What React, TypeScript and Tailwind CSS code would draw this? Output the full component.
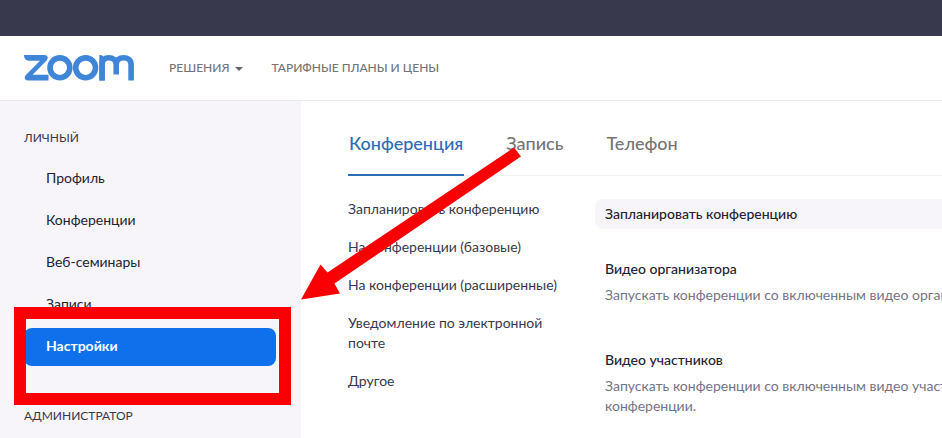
const personalLinks = [
  { label: "Профиль" },
  { label: "Конференции" },
  { label: "Веб-семинары" },
  { label: "Записи" },
  { label: "Настройки", active: true },
];

const tabs = [
  { label: "Конференция", active: true },
  { label: "Запись" },
  { label: "Телефон" },
];

const sections = [
  "Запланировать конференцию",
  "На конференции (базовые)",
  "На конференции (расширенные)",
  "Уведомление по электронной почте",
  "Другое",
];

const Logo = () => (
  <svg
    viewBox="0 0 110 26"
    className="h-[26px] w-[110px]"
    fill="none"
    stroke="#3f86d8"
    strokeWidth="5.6"
    aria-hidden="true"
  >
    <path
      d="M0 0H20.5C23.8 0 24.8 3.2 22.6 5.4L8.6 19.8H24.5V25.5H4C.6 25.5-.3 22.2 1.9 20L16 5.7H4.5C2 5.7 0 3.2 0 0Z"
      fill="#3f86d8"
      stroke="none"
    />
    <circle cx="35.9" cy="12.8" r="9.9" />
    <circle cx="61.6" cy="12.8" r="9.9" />
    <path d="M78.1 25.5V9.5C78.1 5 80.8 2.8 84.8 2.8S92.2 5 92.2 9.5V19.5M92.2 9.5C92.2 5 95.4 2.8 99.6 2.8S107.1 5 107.1 9.5V25.5" />
    <path d="M75.3 0C78.4 0 80.8 1.6 80.8 5V25.5H75.3Z" fill="#3f86d8" stroke="none" />
  </svg>
);

const Header = () => (
  <header className="flex h-[65px] items-center border-b border-[#e9e7ec] px-6">
    <a href="#" aria-label="zoom" className="shrink-0">
      <Logo />
    </a>
    <nav className="ml-[35px] flex items-center gap-7 text-xs leading-5 font-medium text-[#747476]">
      <button className="flex items-center gap-[6px]">
        РЕШЕНИЯ
        <span className="mt-[2px] border-x-4 border-t-4 border-x-transparent border-t-[#666668]" />
      </button>
      <a href="#">ТАРИФНЫЕ ПЛАНЫ И ЦЕНЫ</a>
    </nav>
  </header>
);

const Sidebar = () => (
  <aside className="w-[301px] shrink-0 bg-[#f7f5fa] pt-[27px] pr-[25px] pb-3 pl-6">
    <h2 className="text-xs leading-5 text-[#39394d]">ЛИЧНЫЙ</h2>
    <ul className="mt-3 flex flex-col gap-1">
      {personalLinks.map((link) => (
        <li key={link.label}>
          <a
            href="#"
            className={
              link.active
                ? "block rounded-lg bg-[#0e71eb] px-[22px] pt-2 pb-[10px] text-sm leading-5 font-bold text-white"
                : "block rounded-lg px-[22px] pt-2 pb-[10px] text-sm leading-5 text-[#232333]"
            }
          >
            {link.label}
          </a>
        </li>
      ))}
    </ul>
    <h2 className="mt-10 text-xs leading-5 text-[#39394d]">АДМИНИСТРАТОР</h2>
  </aside>
);

const Setting = ({ title, text }: { title: string; text: string }) => (
  <div>
    <h3 className="text-sm leading-5 font-medium text-[#232333]">{title}</h3>
    <p className="mt-[6px] text-sm leading-5 text-[#747487]">{text}</p>
  </div>
);

const Content = () => (
  <main className="min-w-0 flex-1 overflow-hidden pt-7 pl-[47px]">
    <nav className="flex gap-[41px] border-b border-[#f1f0f4] text-lg leading-7 font-medium">
      {tabs.map((tab) => (
        <a
          key={tab.label}
          href="#"
          className={
            tab.active
              ? "-mb-px border-b-2 border-[#2d6db5] px-px pb-[17px] text-[#2d6db5]"
              : "px-px pb-[17px] text-[#747476]"
          }
        >
          {tab.label}
        </a>
      ))}
    </nav>
    <div className="flex pt-[23px]">
      <ul className="flex w-[247px] shrink-0 flex-col gap-[18px] pr-8 text-sm leading-5 text-[#39394d]">
        {sections.map((section) => (
          <li key={section}>
            <a href="#" className="block">
              {section}
            </a>
          </li>
        ))}
      </ul>
      <div className="min-w-[420px] flex-1">
        <h2 className="rounded-l-lg bg-[#f7f5fa] px-[10px] py-[5px] text-sm leading-5 font-medium text-[#232333]">
          Запланировать конференцию
        </h2>
        <div className="flex flex-col gap-[45px] pt-[30px] pl-[10px]">
          <Setting
            title="Видео организатора"
            text="Запускать конференции со включенным видео организатора."
          />
          <Setting
            title="Видео участников"
            text="Запускать конференции со включенным видео участников конференции."
          />
        </div>
      </div>
    </div>
  </main>
);

// Red frame and arrow drawn over the page to point out the settings link
const Callout = () => (
  <svg
    viewBox="0 0 530 410"
    className="pointer-events-none absolute top-0 left-0 h-[410px] w-[530px]"
    aria-hidden="true"
  >
    <rect x="20" y="313" width="265" height="86" fill="none" stroke="#fa0005" strokeWidth="12" />
    <path d="M514 147.500L521 156.500L334.500 283.500L340 293.500L301 299.500L320.500 264.500L327.500 272.500Z" fill="#fa0005" />
  </svg>
);

export default function App() {
  return (
    <div className="relative flex min-h-screen flex-col overflow-hidden bg-white font-['Lato','Open_Sans',sans-serif]">
      <div className="h-9 bg-[#39394d]" />
      <Header />
      <div className="flex flex-1">
        <Sidebar />
        <Content />
      </div>
      <Callout />
    </div>
  );
}
